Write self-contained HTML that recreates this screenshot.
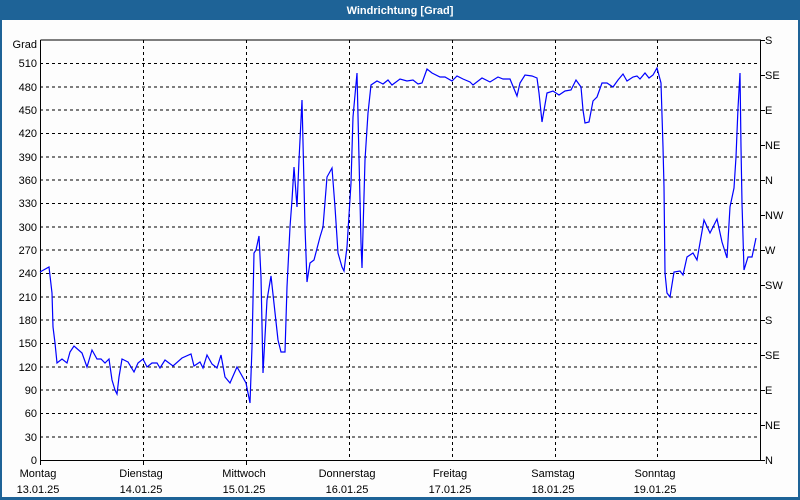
<!DOCTYPE html>
<html><head><meta charset="utf-8"><style>
html,body{margin:0;padding:0;background:#fff}
body{width:800px;height:500px;overflow:hidden;position:relative;font-family:"Liberation Sans","DejaVu Sans",sans-serif}
</style></head><body>
<svg width="800" height="500" xmlns="http://www.w3.org/2000/svg" style="position:absolute;left:0;top:0" font-family="Liberation Sans, DejaVu Sans, sans-serif" font-size="11">
<rect x="0" y="0" width="800" height="500" fill="#fdfdfd"/>
<rect x="0" y="0" width="800" height="20" fill="#1e6397"/>
<rect x="0" y="0" width="2" height="500" fill="#1e6397"/>
<rect x="798" y="0" width="2" height="500" fill="#1e6397"/>
<rect x="0" y="497" width="800" height="3" fill="#1e6397"/>
<text x="400" y="14" fill="#fff" font-weight="bold" text-anchor="middle">Windrichtung [Grad]</text>
<g stroke="#000" stroke-width="1" stroke-dasharray="3,3" shape-rendering="crispEdges">
<line x1="40" y1="63.5" x2="760" y2="63.5"/>
<line x1="40" y1="86.8" x2="760" y2="86.8"/>
<line x1="40" y1="110.2" x2="760" y2="110.2"/>
<line x1="40" y1="133.5" x2="760" y2="133.5"/>
<line x1="40" y1="156.8" x2="760" y2="156.8"/>
<line x1="40" y1="180.2" x2="760" y2="180.2"/>
<line x1="40" y1="203.5" x2="760" y2="203.5"/>
<line x1="40" y1="226.8" x2="760" y2="226.8"/>
<line x1="40" y1="250.2" x2="760" y2="250.2"/>
<line x1="40" y1="273.5" x2="760" y2="273.5"/>
<line x1="40" y1="296.8" x2="760" y2="296.8"/>
<line x1="40" y1="320.2" x2="760" y2="320.2"/>
<line x1="40" y1="343.5" x2="760" y2="343.5"/>
<line x1="40" y1="366.8" x2="760" y2="366.8"/>
<line x1="40" y1="390.2" x2="760" y2="390.2"/>
<line x1="40" y1="413.5" x2="760" y2="413.5"/>
<line x1="40" y1="436.8" x2="760" y2="436.8"/>
<line x1="143.5" y1="40" x2="143.5" y2="461"/>
<line x1="246.5" y1="40" x2="246.5" y2="461"/>
<line x1="349.5" y1="40" x2="349.5" y2="461"/>
<line x1="452.5" y1="40" x2="452.5" y2="461"/>
<line x1="555.5" y1="40" x2="555.5" y2="461"/>
<line x1="657.5" y1="40" x2="657.5" y2="461"/>
</g>
<g stroke="#000" stroke-width="1" fill="none" shape-rendering="crispEdges">
<polyline points="40.5,40 40.5,460.5 760.5,460.5 760.5,40 40.5,40"/>
<line x1="760" y1="40.5" x2="765" y2="40.5"/><line x1="760" y1="75.5" x2="765" y2="75.5"/><line x1="760" y1="110.5" x2="765" y2="110.5"/><line x1="760" y1="145.5" x2="765" y2="145.5"/><line x1="760" y1="180.5" x2="765" y2="180.5"/><line x1="760" y1="215.5" x2="765" y2="215.5"/><line x1="760" y1="250.5" x2="765" y2="250.5"/><line x1="760" y1="285.5" x2="765" y2="285.5"/><line x1="760" y1="320.5" x2="765" y2="320.5"/><line x1="760" y1="355.5" x2="765" y2="355.5"/><line x1="760" y1="390.5" x2="765" y2="390.5"/><line x1="760" y1="425.5" x2="765" y2="425.5"/><line x1="760" y1="460.5" x2="765" y2="460.5"/>
<line x1="40.5" y1="460" x2="40.5" y2="465"/><line x1="143.5" y1="460" x2="143.5" y2="465"/><line x1="246.5" y1="460" x2="246.5" y2="465"/>
</g>
<polyline fill="none" stroke="#0000ff" stroke-width="1.2" points="40,272 49,267 52,293 53,327 55,343 57,363 62,359 67,363 70,352 74,346 82,353 87,367 92,350 97,359 101,359 105,363 109,359 112,380 115,390 117,394 119,377 122,359 128,362 134,372 138,363 143,359 147,367 152,363 157,363 160,368 165,360 173,366 182,358 191,354 194,366 200,362 203,368 207,355 212,364 217,368 221,355 225,377 230,383 237,367 246,383 250,403 252,347 254,253 256,250 259,236 261,277 263,373 267,300 271,276 278,340 281,352 285,352 287,287 290,227 292,200 294,167 297,207 299,160 302,100 305,227 307,282 310,263 314,260 320,237 323,227 327,177 332,168 335,207 338,253 342,267 344,271 347,247 351,183 353,117 357,73 361,243 362,268 365,160 368,113 371,85 377,81 383,84 388,80 392,85 400,79 407,81 413,80 418,84 422,83 427,69 432,73 440,77 445,77 452,81 457,76 463,79 470,82 473,85 482,78 490,82 498,77 503,79 510,79 517,96 520,83 525,75 532,76 537,78 539,93 542,122 547,93 553,91 559,95 565,91 571,90 576,80 581,87 583,110 585,123 589,122 593,101 597,97 602,83 607,83 613,87 618,80 623,74 627,81 633,77 637,76 640,79 645,73 649,78 653,75 657,68 661,83 663,147 664,187 665,273 667,293 670,297 674,272 680,271 683,275 687,257 693,253 697,260 704,220 710,233 717,219 722,242 727,258 730,207 734,188 736,157 738,108 740,73 741,147 742,203 744,270 748,257 752,257 756,238"/>
<g fill="#000" text-anchor="end">
<text x="37" y="48">Grad</text>
<text x="37" y="67">510</text><text x="37" y="91">480</text><text x="37" y="114">450</text><text x="37" y="137">420</text><text x="37" y="161">390</text><text x="37" y="184">360</text><text x="37" y="207">330</text><text x="37" y="231">300</text><text x="37" y="254">270</text><text x="37" y="277">240</text><text x="37" y="301">210</text><text x="37" y="324">180</text><text x="37" y="347">150</text><text x="37" y="371">120</text><text x="37" y="394">90</text><text x="37" y="417">60</text><text x="37" y="441">30</text><text x="37" y="464">0</text>
</g>
<g fill="#000">
<text x="765" y="44">S</text><text x="765" y="79">SE</text><text x="765" y="114">E</text><text x="765" y="149">NE</text><text x="765" y="184">N</text><text x="765" y="219">NW</text><text x="765" y="254">W</text><text x="765" y="289">SW</text><text x="765" y="324">S</text><text x="765" y="359">SE</text><text x="765" y="394">E</text><text x="765" y="429">NE</text><text x="765" y="464">N</text>
</g>
<g fill="#000" text-anchor="middle">
<text x="38" y="477">Montag</text><text x="38" y="493">13.01.25</text>
<text x="141" y="477">Dienstag</text><text x="141" y="493">14.01.25</text>
<text x="244" y="477">Mittwoch</text><text x="244" y="493">15.01.25</text>
<text x="347" y="477">Donnerstag</text><text x="347" y="493">16.01.25</text>
<text x="450" y="477">Freitag</text><text x="450" y="493">17.01.25</text>
<text x="553" y="477">Samstag</text><text x="553" y="493">18.01.25</text>
<text x="655" y="477">Sonntag</text><text x="655" y="493">19.01.25</text>
</g>
</svg>
</body></html>
